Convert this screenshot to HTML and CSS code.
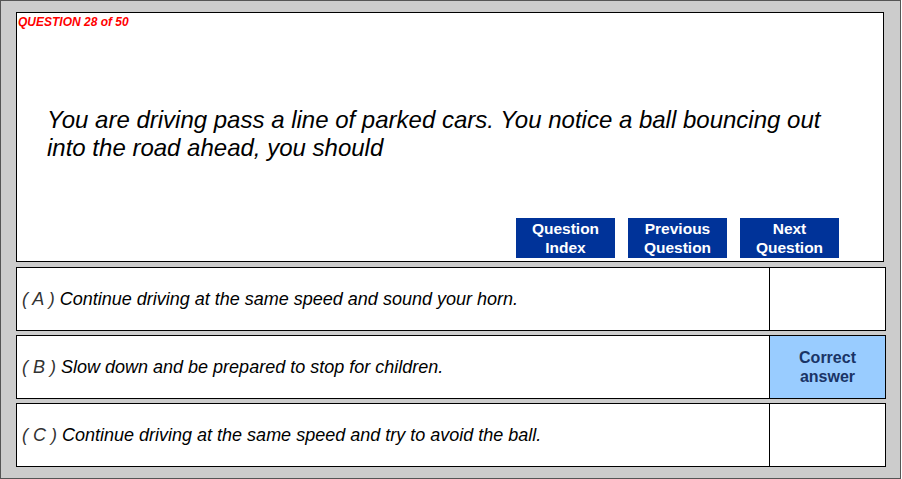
FILE: index.html
```html
<!DOCTYPE html>
<html lang="en">
<head>
    <meta charset="UTF-8">
    <title>Question 28 of 50</title>
    <link rel="stylesheet" href="styles.css">
</head>
<body>
    <div class="frame">
        <div class="question-box">
            <div class="question-count">QUESTION 28 of 50</div>
            <div class="question-text">You are driving pass a line of parked cars. You notice a ball bouncing out into the road ahead, you should</div>
            <div class="nav-buttons">
                <button class="nav-btn">Question<br>Index</button>
                <button class="nav-btn">Previous<br>Question</button>
                <button class="nav-btn">Next<br>Question</button>
            </div>
        </div>

        <div class="answer">
            <p class="answer-text"><span class="letter">( A )</span> Continue driving at the same speed and sound your horn.</p>
            <div class="answer-mark"></div>
        </div>
        <div class="answer">
            <p class="answer-text"><span class="letter">( B )</span> Slow down and be prepared to stop for children.</p>
            <div class="answer-mark correct">Correct<br>answer</div>
        </div>
        <div class="answer">
            <p class="answer-text"><span class="letter">( C )</span> Continue driving at the same speed and try to avoid the ball.</p>
            <div class="answer-mark"></div>
        </div>
    </div>
</body>
</html>
```

FILE: styles.css
```css
body {
    margin: 0;
    font-family: "Liberation Sans", Arial, sans-serif;
}
.frame {
    box-sizing: border-box;
    width: 901px;
    height: 479px;
    border: 1px solid #555;
    background-color: #cccccc;
    padding: 11px 14px 0 15px;
}
.question-box {
    box-sizing: border-box;
    width: 868px;
    height: 250px;
    border: 1px solid #000;
    background-color: #fff;
    display: flex;
    flex-direction: column;
}
.question-count {
    color: #ff0000;
    font-size: 12px;
    font-weight: bold;
    font-style: italic;
    padding: 2px 0 0 1px;
}
.question-text {
    font-size: 24px;
    font-style: italic;
    line-height: 28px;
    padding: 0 36px 0 30px;
    margin-top: 77px;
}
.nav-buttons {
    margin-top: auto;
    display: flex;
    justify-content: flex-end;
    gap: 13px;
    padding: 0 44px 3px 0;
}
.nav-btn {
    width: 99px;
    height: 40px;
    padding: 0;
    border: none;
    background-color: #003399;
    color: #fff;
    font-family: "Liberation Sans", Arial, sans-serif;
    font-size: 15.5px;
    font-weight: bold;
    line-height: 19px;
}
.answer {
    box-sizing: border-box;
    width: 870px;
    height: 64px;
    margin-top: 4px;
    border: 1px solid #000;
    background-color: #fff;
    display: flex;
    align-items: center;
}
.question-box + .answer {
    margin-top: 5px;
}
.answer-text {
    flex: 1;
    margin: 0;
    padding-left: 5px;
    font-size: 18px;
    font-style: italic;
    color: #000;
}
.letter {
    color: #333;
}
.answer-mark {
    align-self: stretch;
    width: 115px;
    border-left: 1px solid #000;
    display: flex;
    align-items: center;
    justify-content: center;
    text-align: center;
    font-size: 16px;
    font-weight: bold;
    line-height: 19px;
    color: #1a3466;
}
.answer-mark.correct {
    background-color: #99ccff;
}
```
